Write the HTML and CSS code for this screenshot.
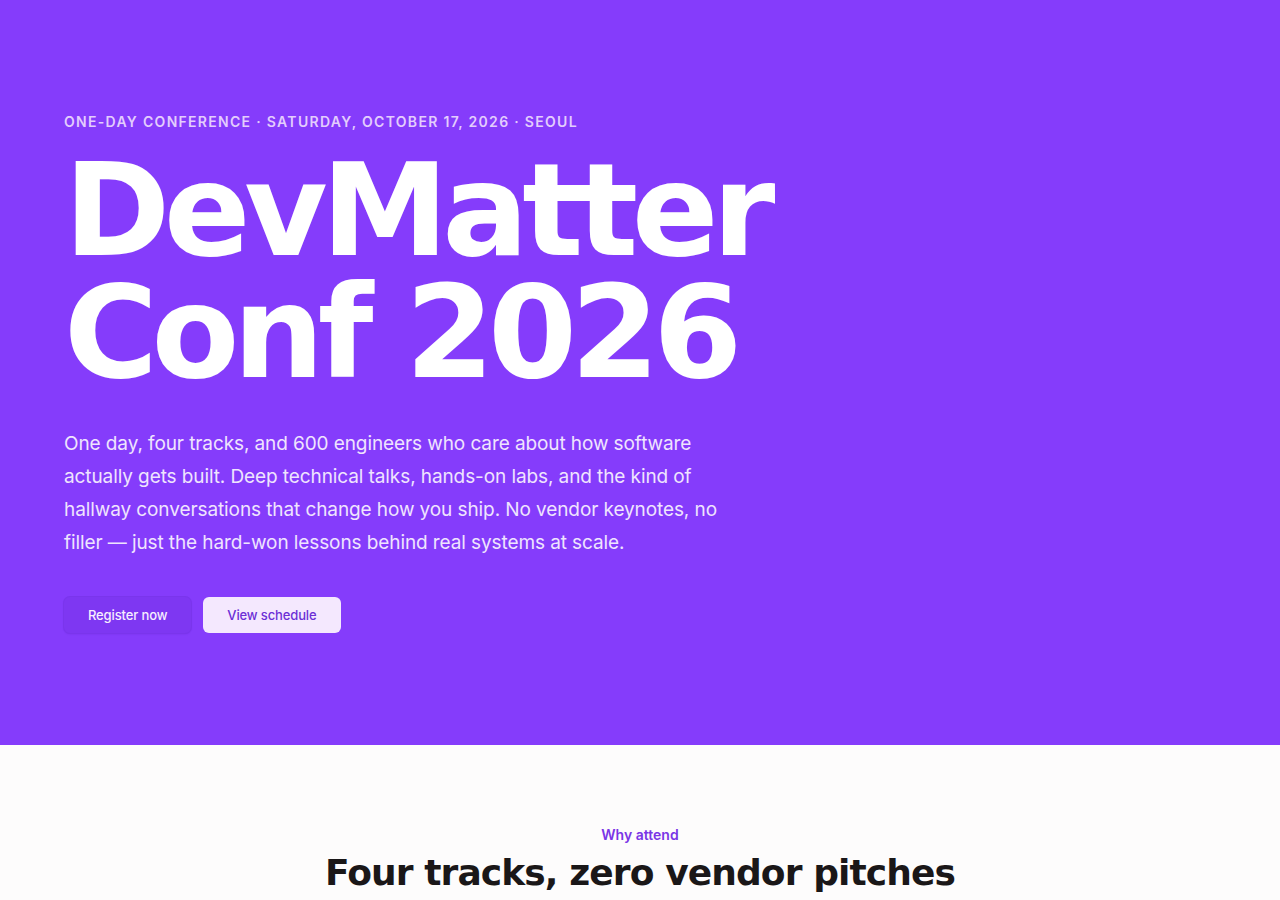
FILE: index.html
```html
<!DOCTYPE html>
<html lang="en">
<head>
    <meta charset="UTF-8">
    <meta name="viewport" content="width=device-width, initial-scale=1.0">
    <title>DevMatter Conf 2026</title>
    <link rel="stylesheet" href="styles.css">
</head>
<body>
    <header class="hero">
        <div class="hero-inner">
            <p class="eyebrow">One-day conference · Saturday, October 17, 2026 · Seoul</p>
            <h1 class="hero-title">DevMatter<br>Conf 2026</h1>
            <p class="lede">One day, four tracks, and 600 engineers who care about how software actually gets built. Deep technical talks, hands-on labs, and the kind of hallway conversations that change how you ship. No vendor keynotes, no filler — just the hard-won lessons behind real systems at scale.</p>
            <div class="actions">
                <a href="#register" class="btn btn-primary">Register now</a>
                <a href="#schedule" class="btn btn-secondary">View schedule</a>
            </div>
        </div>
    </header>

    <section class="why">
        <p class="section-label">Why attend</p>
        <h2 class="section-title">Four tracks, zero vendor pitches</h2>
    </section>
</body>
</html>
```

FILE: styles.css
```css
body {
    margin: 0;
    font-family: Inter, "Noto Sans", sans-serif;
    background-color: #fdfcfc;
    color: #1a1a1a;
}

.hero {
    background-color: #853cfb;
    color: #fff;
    height: 745px;
    box-sizing: border-box;
    padding: 112px 64px 0;
}

.hero-inner {
    max-width: 1152px;
}

.eyebrow {
    margin: 0;
    font-size: 14px;
    line-height: 20px;
    font-weight: 600;
    letter-spacing: 1.3px;
    text-transform: uppercase;
    color: #e3cdfd;
}

.hero-title {
    margin: 18px 0 0;
    font-family: "DejaVu Sans", sans-serif;
    font-weight: 700;
    font-size: 128px;
    line-height: 122px;
    letter-spacing: -0.05em;
    color: #fff;
}

.lede {
    max-width: 672px;
    margin: 33px 0 0;
    font-size: 19px;
    line-height: 33px;
    letter-spacing: -0.005em;
    color: #efe4fe;
}

.actions {
    display: flex;
    gap: 12px;
    margin-top: 38px;
}

.btn {
    display: inline-block;
    padding: 8px 24px;
    font-size: 13px;
    line-height: 20px;
    font-weight: 500;
    letter-spacing: -0.01em;
    text-decoration: none;
    border-radius: 6px;
}

.btn-primary {
    background-color: #7e37f2;
    color: #f6eefe;
    box-shadow: 0 0 0 1px #7a35ec, 0 1px 2px rgba(60, 10, 140, 0.2);
}

.btn-secondary {
    background-color: #f4e8fe;
    color: #6c2fd6;
}

.why {
    padding: 80px 64px 0;
    text-align: center;
}

.section-label {
    margin: 0;
    font-size: 14px;
    line-height: 20px;
    font-weight: 600;
    color: #7a35e6;
}

.section-title {
    margin: 6px 0 0;
    font-family: "DejaVu Sans", sans-serif;
    font-weight: 700;
    font-size: 36px;
    line-height: 44px;
    letter-spacing: -0.025em;
    color: #1a1718;
}
```
